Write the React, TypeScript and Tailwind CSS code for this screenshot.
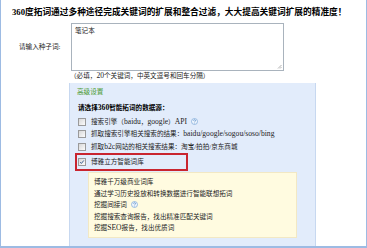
import { ReactNode } from "react"

function Help() {
  return (
    <svg width="7" height="7" viewBox="0 0 14 14" className="inline-block ml-[4px] align-[-1px]">
      <circle cx="7" cy="7" r="6" fill="#eef5fd" stroke="#7aa6d8" strokeWidth="1.4" />
      <path d="M5.2 5.4a1.9 1.9 0 1 1 2.6 1.7c-.6.3-.8.6-.8 1.3" fill="none" stroke="#4f86c6" strokeWidth="1.4" />
      <circle cx="7" cy="10.3" r=".8" fill="#4f86c6" />
    </svg>
  )
}

// latin runs in the old bitmap font render wider than Liberation Serif
function En({ children }: { children: ReactNode }) {
  return <span className="text-[7.6px]">{children}</span>
}

function Box({ checked }: { checked?: boolean }) {
  return (
    <span className="w-[8px] h-[8px] shrink-0 border border-[#9a9a9a] bg-gradient-to-br from-[#d8d8d8] to-[#fbfbfb] flex items-center justify-center">
      {checked && (
        <svg width="6" height="6" viewBox="0 0 10 10">
          <path d="M2 5.2l2 2.2 4-5" fill="none" stroke="#3a5f8f" strokeWidth="1.6" />
        </svg>
      )}
    </span>
  )
}

function Row({ children, checked }: { children: ReactNode; checked?: boolean }) {
  return (
    <div className="flex items-center gap-[5px] h-[12.5px]">
      <Box checked={checked} />
      <span className="whitespace-nowrap">{children}</span>
    </div>
  )
}

export default function App() {
  return (
    <div className="w-[367px] h-[248px] overflow-hidden bg-white border-x border-b-2 border-[#9dbbe3] flex flex-col text-[6.6px] leading-[10px] text-[#222] font-['Liberation_Serif','Noto_Sans_CJK_SC',serif]">
      <h1 className="h-[23px] pl-[11px] pt-[7px] text-[8.7px] font-bold leading-[10px] text-black whitespace-nowrap">
        360度拓词通过多种途径完成关键词的扩展和整合过滤，大大提高关键词扩展的精准度！
      </h1>
      <div className="flex items-center h-[48px]">
        <label className="w-[70px] pl-[18px] whitespace-nowrap">请输入种子词:</label>
        <div className="relative w-[213px] h-[48px] border border-[#a9b3bd] bg-white px-[3px] pt-[2px]">
          笔记本
          <svg width="5" height="5" viewBox="0 0 5 5" className="absolute right-[1px] bottom-[1px]">
            <path d="M4.5 1L1 4.5M4.5 3L3 4.5" stroke="#a0a0a0" strokeWidth=".8" />
          </svg>
        </div>
      </div>
      <p className="ml-[69px] h-[10px] whitespace-nowrap">
        （必填，<En>20</En>个关键词，中英文逗号和回车分隔）
      </p>
      <div className="ml-[68px] mt-[2px] w-[247px] flex-1 bg-[#e2ecfb] border-x border-[#c7d8f0] pt-[4px] pl-[5px]">
        <div className="pl-[2px] text-[#4b9a32]">高级设置</div>
        <div className="pl-[3px] mt-[6px] font-bold text-black">
          请选择<En>360</En>智能拓词的数据源：
        </div>
        <div className="pl-[3px] mt-[2.5px]">
          <Row>
            搜索引擎（<En>baidu</En>，<En>google</En>）<En>API</En>
            <Help />
          </Row>
          <Row>
            抓取搜索引擎相关搜索的结果：<En>baidu/google/sogou/soso/bing</En>
          </Row>
          <Row>
            抓取<En>b2c</En>网站的相关搜索结果：淘宝/拍拍/京东商城
          </Row>
        </div>
        <div className="w-[113px] h-[18px] border-2 border-[#c9252f] pl-[1px] flex items-center">
          <Row checked>博雅立方智能词库</Row>
        </div>
        <div className="ml-[13px] mt-[1px] w-[209px] h-[66px] bg-[#fffbe0] border border-[#f2e8c4] pl-[5px] pt-[3px] leading-[11.5px]">
          <div>博雅千万级商业词库</div>
          <div>通过学习历史投放和转换数据进行智能联想拓词</div>
          <div>
            挖掘间接词
            <Help />
          </div>
          <div>挖掘搜索查询报告，找出精准匹配关键词</div>
          <div>
            挖掘<En>SEO</En>报告，找出优质词
          </div>
        </div>
      </div>
    </div>
  )
}
